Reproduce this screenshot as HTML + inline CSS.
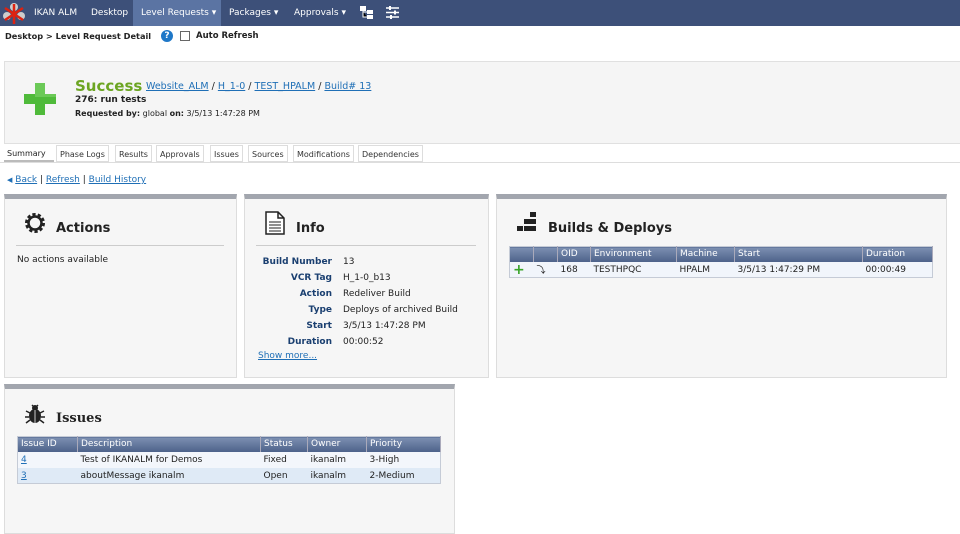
<!DOCTYPE html>
<html><head><meta charset="utf-8"><style>
*{box-sizing:border-box;margin:0;padding:0}
body{width:960px;height:527px;overflow:hidden;background:#fff;font-family:"DejaVu Sans",Verdana,sans-serif;font-size:9px;color:#222;position:relative}
.nav{position:absolute;left:0;top:0;width:960px;height:26px;background:#3d5079}
.nav span{position:absolute;top:0;height:26px;line-height:27px;color:#fff;font-size:9px}
.hl{background:#5b74a3}
a{color:#1f6fb6;text-decoration:underline}
.abs{position:absolute}
.panel{position:absolute;background:#f6f6f6;border:1px solid #ddd;border-top:5px solid #a2a6ae}
.ptitle{position:absolute;font-weight:bold;font-size:13px;color:#222}
.hr{position:absolute;height:1px;background:#ccc}
table{border-collapse:collapse;font-size:9px}
th{background:linear-gradient(#7d90b2,#4c6189);color:#fff;font-weight:normal;text-align:left;height:15px;padding:0 3px;border-right:1px solid #aab}
td{height:16px;padding:0 3px;padding-top:1px}
.tab{position:absolute;top:145px;height:17px;line-height:17px;border:1px solid #ddd;padding:0 3px;background:#fff;font-size:8px;color:#333}
.lbl{color:#1a3f70;font-weight:bold;text-align:right}
</style></head><body>
<div class="nav">
<svg class="abs" style="left:3px;top:2px" width="22" height="22" viewBox="0 0 22 22"><circle cx="11" cy="5" r="4" fill="#ccc"/><circle cx="4" cy="14" r="4" fill="#ccc"/><circle cx="18" cy="14" r="4" fill="#ccc"/><path d="M11 2L11 22M2 6L20 18M20 6L2 18" stroke="#d21" stroke-width="2.5"/></svg>
<span style="left:34px">IKAN ALM</span>
<span style="left:91px">Desktop</span>
<span class="hl" style="left:133px;width:88px;padding-left:8px">Level Requests ▾</span>
<span style="left:229px">Packages ▾</span>
<span style="left:294px">Approvals ▾</span>
<svg class="abs" style="left:360px;top:6px" width="13" height="13"><rect x="0" y="0" width="6" height="5" fill="#fff"/><rect x="7" y="4" width="6" height="4" fill="#fff"/><rect x="7" y="9" width="6" height="4" fill="#fff"/><path d="M3 5V11H7M3 6H7" stroke="#fff"/></svg>
<svg class="abs" style="left:386px;top:6px" width="13" height="13"><path d="M0 2H13M0 6.5H13M0 11H13" stroke="#fff" stroke-width="1.5"/><rect x="3" y="0" width="2" height="4" fill="#fff"/><rect x="8" y="4.5" width="2" height="4" fill="#fff"/><rect x="4" y="9" width="2" height="4" fill="#fff"/></svg>
</div>
<div class="abs" style="left:5px;top:31px;font-weight:bold;font-size:8.2px">Desktop &gt; Level Request Detail</div>
<div class="abs" style="left:161px;top:30px;width:12px;height:12px;border-radius:50%;background:#1f78c8;color:#fff;font-weight:bold;font-size:9px;text-align:center;line-height:12px">?</div>
<div class="abs" style="left:180px;top:31px;width:10px;height:10px;border:1px solid #666;background:#fff"></div>
<div class="abs" style="left:196px;top:31px;font-weight:bold;font-size:8.5px">Auto Refresh</div>

<div class="abs" style="left:4px;top:61px;width:956px;height:83px;background:#f5f5f5;border:1px solid #e0e0e0;border-right:none"></div>
<svg class="abs" style="left:24px;top:83px" width="32" height="32"><path d="M11 0H21V11H32V21H21V32H11V21H0V11H11Z" fill="#4fba3a"/><path d="M11 0H21V11H32V14H11Z" fill="#7fd46a" opacity=".6"/></svg>
<div class="abs" style="left:75px;top:77px;color:#6ca522;font-weight:bold;font-size:15px">Success</div>
<div class="abs" style="left:146px;top:81px;font-size:9.5px"><a>Website_ALM</a> / <a>H_1-0</a> / <a>TEST_HPALM</a> / <a>Build# 13</a></div>
<div class="abs" style="left:75px;top:95px;font-weight:bold;font-size:9px">276: run tests</div>
<div class="abs" style="left:75px;top:109px;font-size:8px"><b>Requested by:</b> global <b>on:</b> 3/5/13 1:47:28 PM</div>

<div class="tab" style="left:4px;border:none;background:none;color:#222">Summary</div>
<div class="abs" style="left:4px;top:160px;width:50px;height:3px;background:#bbb"></div>
<div class="tab" style="left:56px">Phase Logs</div>
<div class="tab" style="left:115px">Results</div>
<div class="tab" style="left:156px">Approvals</div>
<div class="tab" style="left:210px">Issues</div>
<div class="tab" style="left:248px">Sources</div>
<div class="tab" style="left:293px">Modifications</div>
<div class="tab" style="left:358px">Dependencies</div>
<div class="abs" style="left:0;top:162px;width:960px;height:1px;background:#ddd"></div>

<div class="abs" style="left:7px;top:175px;font-size:9px"><span style="color:#1f6fb6;font-size:7px">◀</span> <a>Back</a> | <a>Refresh</a> | <a>Build History</a></div>

<div class="panel" style="left:4px;top:194px;width:233px;height:184px"></div>
<svg class="abs" style="left:23px;top:211px" width="24" height="24" viewBox="0 0 24 24"><circle cx="12" cy="12" r="8" fill="none" stroke="#222" stroke-width="4" stroke-dasharray="3 2"/><circle cx="12" cy="12" r="6.5" fill="none" stroke="#222" stroke-width="2.5"/></svg>
<div class="ptitle" style="left:56px;top:221px">Actions</div>
<div class="hr" style="left:16px;top:245px;width:208px"></div>
<div class="abs" style="left:17px;top:255px">No actions available</div>

<div class="panel" style="left:244px;top:194px;width:245px;height:184px"></div>
<svg class="abs" style="left:265px;top:211px" width="20" height="24"><path d="M1 1H13L19 7V23H1Z M13 1V7H19" fill="#fff" stroke="#222" stroke-width="1.5"/><path d="M4 11H16M4 14H16M4 17H16M4 20H16" stroke="#222"/></svg>
<div class="ptitle" style="left:296px;top:221px">Info</div>
<div class="hr" style="left:256px;top:245px;width:220px"></div>
<table class="abs" style="left:250px;top:253px">
<tr><td class="lbl" style="width:85px">Build Number</td><td style="padding-left:8px">13</td></tr>
<tr><td class="lbl">VCR Tag</td><td style="padding-left:8px">H_1-0_b13</td></tr>
<tr><td class="lbl">Action</td><td style="padding-left:8px">Redeliver Build</td></tr>
<tr><td class="lbl">Type</td><td style="padding-left:8px">Deploys of archived Build</td></tr>
<tr><td class="lbl">Start</td><td style="padding-left:8px">3/5/13 1:47:28 PM</td></tr>
<tr><td class="lbl">Duration</td><td style="padding-left:8px">00:00:52</td></tr>
</table>
<div class="abs" style="left:258px;top:351px"><a>Show more...</a></div>

<div class="panel" style="left:496px;top:194px;width:451px;height:184px"></div>
<svg class="abs" style="left:516px;top:212px" width="22" height="20"><g fill="#222"><rect x="14" y="0" width="6" height="5"/><rect x="8" y="7" width="6" height="5"/><rect x="14" y="7" width="6" height="5"/><rect x="1" y="14" width="6" height="5"/><rect x="8" y="14" width="6" height="5"/><rect x="14" y="14" width="6" height="5"/></g></svg>
<div class="ptitle" style="left:548px;top:221px">Builds &amp; Deploys</div>
<table class="abs" style="left:509px;top:246px;width:424px;border:1px solid #c5cbd6">
<tr><th style="width:24px"></th><th style="width:24px"></th><th style="width:33px">OID</th><th style="width:86px">Environment</th><th style="width:58px">Machine</th><th style="width:128px">Start</th><th>Duration</th></tr>
<tr style="background:#f1f5fb"><td style="color:#3aa52a;font-weight:bold;font-size:14px;line-height:14px">+</td><td>⤵</td><td>168</td><td>TESTHPQC</td><td>HPALM</td><td>3/5/13 1:47:29 PM</td><td>00:00:49</td></tr>
</table>

<div class="panel" style="left:4px;top:384px;width:451px;height:150px"></div>
<svg class="abs" style="left:24px;top:403px" width="22" height="22" viewBox="0 0 22 22"><ellipse cx="11" cy="13" rx="6" ry="7" fill="#222"/><circle cx="11" cy="5" r="3" fill="#222"/><path d="M2 8L6 10M20 8L16 10M1 14H5M21 14H17M2 20L6 17M20 20L16 17M8 2L9 3M14 2L13 3" stroke="#222" stroke-width="1.5"/><path d="M11 7V20" stroke="#ccc"/></svg>
<div class="ptitle" style="left:56px;top:411px;font-family:'DejaVu Serif',serif;font-size:13px">Issues</div>
<table class="abs" style="left:17px;top:436px;width:424px;border:1px solid #c5cbd6">
<tr><th style="width:60px">Issue ID</th><th style="width:183px">Description</th><th style="width:47px">Status</th><th style="width:59px">Owner</th><th>Priority</th></tr>
<tr style="background:#f3f6fb"><td><a>4</a></td><td>Test of IKANALM for Demos</td><td>Fixed</td><td>ikanalm</td><td>3-High</td></tr>
<tr style="background:#dfeaf6"><td><a>3</a></td><td>aboutMessage ikanalm</td><td>Open</td><td>ikanalm</td><td>2-Medium</td></tr>
</table>
</body></html>
